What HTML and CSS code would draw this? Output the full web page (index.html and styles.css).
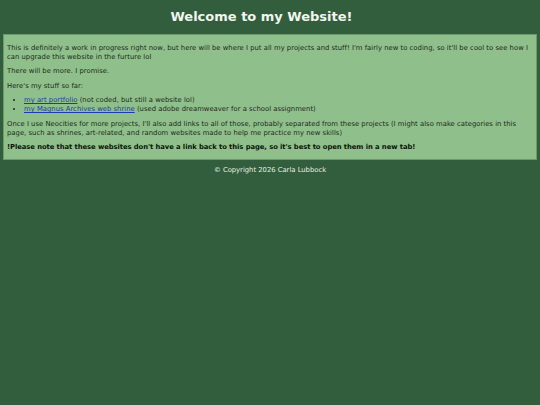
FILE: index.html
```html
<!DOCTYPE html>
<html>
<head>
<meta charset="utf-8">
<title>Welcome to my Website!</title>
<link rel="stylesheet" href="styles.css">
</head>
<body>
<h1 class="title">Welcome to my Website!</h1>
<div class="content">
<p>This is definitely a work in progress right now, but here will be where I put all my projects and stuff! I'm fairly new to coding, so it'll be cool to see how I can upgrade this website in the furture lol</p>
<p>There will be more. I promise.</p>
<p>Here's my stuff so far:</p>
<ul class="list">
<li><a href="#">my art portfolio</a> (not coded, but still a website lol)</li>
<li><a href="#">my Magnus Archives web shrine</a> (used adobe dreamweaver for a school assignment)</li>
</ul>
<p>Once I use Neocities for more projects, I'll also add links to all of those, probably separated from these projects (I might also make categories in this page, such as shrines, art-related, and random websites made to help me practice my new skills)</p>
<p class="note">!Please note that these websites don't have a link back to this page, so it's best to open them in a new tab!</p>
</div>
<footer class="footer">© Copyright 2026 Carla Lubbock</footer>
</body>
</html>
```
FILE: styles.css
```css
html, body {
  margin: 0;
  padding: 0;
}
body {
  background: #335e3d;
  font-family: Verdana, "DejaVu Sans", sans-serif;
  color: #1c2a1c;
  padding: 0 3px;
}
.title {
  margin: 0;
  padding: 9px 17px 9px 0;
  text-align: center;
  color: #f2f5ee;
  font-size: 13px;
  line-height: 16px;
  font-weight: bold;
}
.content {
  background: #8fbf8a;
  border: 1px solid #6c9a68;
  padding: 3px 3px 1px;
  font-size: 6.8px;
  line-height: 9px;
  letter-spacing: 0.03px;
}
.content p {
  margin: 5.5px 0;
}
.list {
  margin: 5.5px 0;
  padding-left: 17px;
}
.list a {
  color: #1b3bb0;
}
.note {
  font-weight: bold;
  color: #0c150c;
  letter-spacing: -0.06px;
}
.footer {
  text-align: center;
  color: #e8efe4;
  font-size: 6.8px;
  padding-top: 6px;
}
```
